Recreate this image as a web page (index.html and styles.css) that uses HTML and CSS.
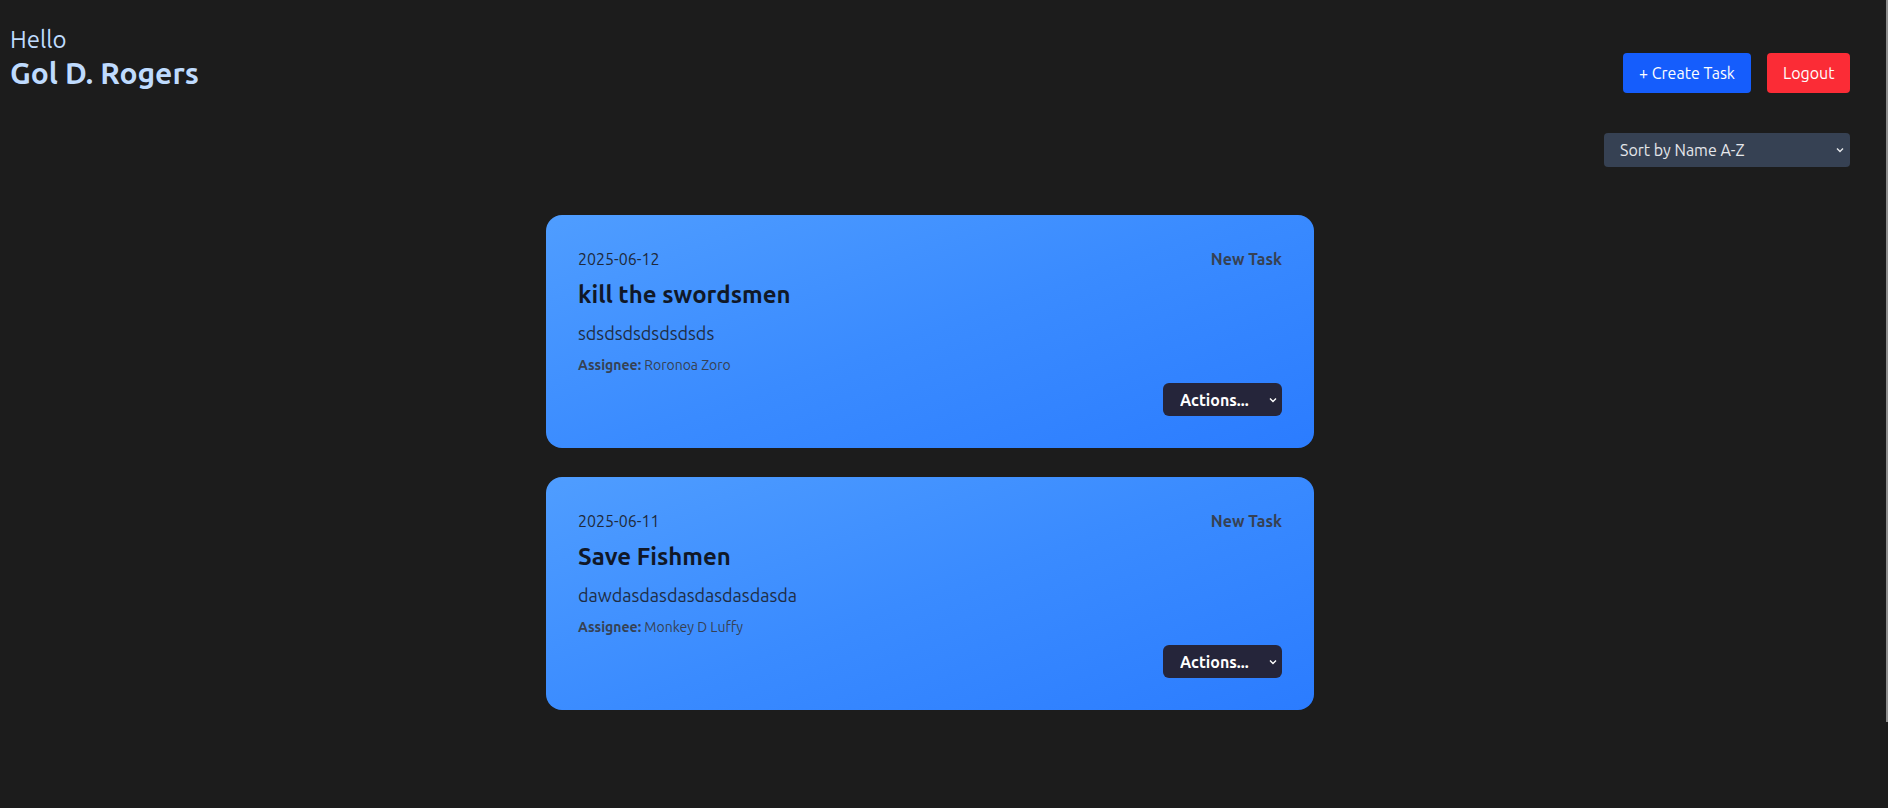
FILE: index.html
```html
<!DOCTYPE html>
<html lang="en">
<head>
<meta charset="utf-8">
<title>Tasks</title>
<link rel="stylesheet" href="styles.css">
</head>
<body>
<div class="page">
  <header class="header">
    <div class="greeting">
      <div class="hello">Hello</div>
      <div class="name">Gol D. Rogers</div>
    </div>
    <div class="header-actions">
      <button class="btn btn-create">+ Create Task</button>
      <button class="btn btn-logout">Logout</button>
    </div>
  </header>

  <div class="sort-row">
    <span class="select-wrap sort-wrap">
      <select class="sort-select">
        <option>Sort by Name A-Z</option>
      </select>
      <svg class="chev" width="8" height="6" viewBox="0 0 8 6"><path d="M1 1.5 L4 4.5 L7 1.5" fill="none" stroke="#e5e7eb" stroke-width="1.4"/></svg>
    </span>
  </div>

  <main class="tasks">
    <article class="card">
      <div class="card-top">
        <span class="date">2025-06-12</span>
        <span class="status">New Task</span>
      </div>
      <h2 class="title">kill the swordsmen</h2>
      <p class="desc">sdsdsdsdsdsdsds</p>
      <p class="assignee"><b>Assignee:</b> Roronoa Zoro</p>
      <div class="card-actions">
        <span class="select-wrap actions-wrap">
          <select class="actions-select"><option>Actions...</option></select>
          <svg class="chev" width="8" height="6" viewBox="0 0 8 6"><path d="M1 1.5 L4 4.5 L7 1.5" fill="none" stroke="#ffffff" stroke-width="1.4"/></svg>
        </span>
      </div>
    </article>

    <article class="card">
      <div class="card-top">
        <span class="date">2025-06-11</span>
        <span class="status">New Task</span>
      </div>
      <h2 class="title">Save Fishmen</h2>
      <p class="desc">dawdasdasdasdasdasdasda</p>
      <p class="assignee"><b>Assignee:</b> Monkey D Luffy</p>
      <div class="card-actions">
        <span class="select-wrap actions-wrap">
          <select class="actions-select"><option>Actions...</option></select>
          <svg class="chev" width="8" height="6" viewBox="0 0 8 6"><path d="M1 1.5 L4 4.5 L7 1.5" fill="none" stroke="#ffffff" stroke-width="1.4"/></svg>
        </span>
      </div>
    </article>
  </main>
</div>
<div class="scroll-line"></div>
</body>
</html>
```

FILE: styles.css
```css
* { box-sizing: border-box; }

html, body {
  margin: 0;
  padding: 0;
  background: #1c1c1c;
  font-family: "Ubuntu", "Open Sans", "Noto Sans", sans-serif;
}

.page {
  width: 1860px;
  padding: 24px 10px 0 10px;
}

.header {
  display: flex;
  justify-content: space-between;
  align-items: flex-start;
}

.hello {
  color: #bfdbfe;
  font-size: 24px;
  line-height: 32px;
}

.name {
  color: #bfdbfe;
  font-size: 30px;
  line-height: 36px;
  font-weight: 700;
  margin-top: -1px;
}

.header-actions {
  display: flex;
  gap: 16px;
  margin-top: 29px;
}

.btn {
  height: 40px;
  border: none;
  border-radius: 4px;
  color: #ffffff;
  font-family: inherit;
  font-size: 16px;
  padding: 0 16px;
}

.btn-create { background: #155dfc; width: 128px; }
.btn-logout { background: #fb2c36; width: 83px; }

.sort-row {
  display: flex;
  justify-content: flex-end;
  margin-top: 40px;
}

.select-wrap {
  position: relative;
  display: inline-block;
}

.select-wrap .chev {
  position: absolute;
  top: 50%;
  transform: translateY(-50%);
  pointer-events: none;
}

.sort-wrap .chev { right: 6px; }
.actions-wrap .chev { right: 5px; }

select {
  appearance: none;
  -webkit-appearance: none;
  border: none;
  outline: none;
  font-family: inherit;
  margin: 0;
  display: block;
}

.sort-select {
  width: 246px;
  height: 34px;
  background: #364153;
  color: #e5e7eb;
  font-size: 16px;
  padding: 0 16px;
  border-radius: 4px;
}

.tasks {
  width: 768px;
  margin: 48px auto 0;
  display: flex;
  flex-direction: column;
  gap: 29px;
}

.card {
  background: linear-gradient(160deg, #4f9dff 0%, #3a8bff 50%, #2b7cff 100%);
  border-radius: 16px;
  padding: 32px;
  display: flex;
  flex-direction: column;
}

.card-top {
  display: flex;
  justify-content: space-between;
  font-size: 16px;
  line-height: 24px;
}

.date { color: #1e293b; }
.status { color: #364153; font-weight: 700; }

.title {
  margin: 8px 0 0;
  font-size: 24px;
  line-height: 32px;
  font-weight: 700;
  color: #101828;
}

.desc {
  margin: 8px 0 0;
  font-size: 18px;
  line-height: 28px;
  color: #1e2d45;
}

.assignee {
  margin: 8px 0 0;
  font-size: 14px;
  line-height: 20px;
  color: #364153;
}

.assignee b { font-weight: 700; }

.card-actions {
  display: flex;
  justify-content: flex-end;
  margin-top: 8px;
}

.actions-select {
  width: 119px;
  height: 33px;
  background: #25253a;
  color: #ffffff;
  font-size: 16px;
  font-weight: 700;
  padding: 0 17px;
  border-radius: 6px;
}

.scroll-line {
  position: fixed;
  top: 0;
  right: 0;
  width: 2px;
  height: 722px;
  background: #8e8e8e;
}
```
